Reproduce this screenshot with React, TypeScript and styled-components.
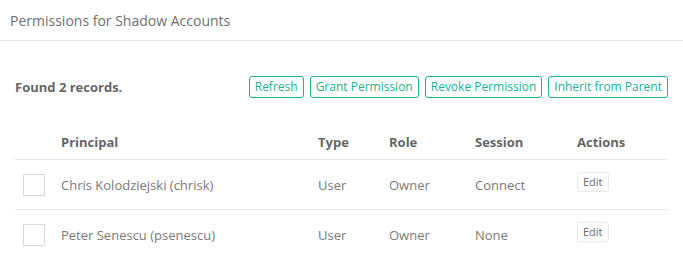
import styled, { createGlobalStyle } from 'styled-components'

const GlobalStyle = createGlobalStyle`
  body {
    margin: 0;
    background: #ffffff;
    font-family: 'Open Sans', 'Liberation Sans', sans-serif;
  }
`

const rows = [
  { id: 'chrisk', principal: 'Chris Kolodziejski (chrisk)', type: 'User', role: 'Owner', session: 'Connect' },
  { id: 'psenescu', principal: 'Peter Senescu (psenescu)', type: 'User', role: 'Owner', session: 'None' },
]

const actions = ['Refresh', 'Grant Permission', 'Revoke Permission', 'Inherit from Parent']

const Panel = styled.section`
  width: 683px;
  height: 273px;
  overflow: hidden;
`

const PanelHeader = styled.div`
  height: 41px;
  padding: 0 10px;
  display: flex;
  align-items: center;
  border-bottom: 1px solid #e7e7e7;
  box-sizing: border-box;
`

const Title = styled.h2`
  margin: 0;
  font-size: 14px;
  font-weight: 400;
  color: #707070;
`

const Body = styled.div`
  padding: 35px 15px 0 15px;
`

const Toolbar = styled.div`
  display: flex;
  justify-content: space-between;
  align-items: center;
`

const Count = styled.div`
  font-size: 13px;
  font-weight: 700;
  color: #666666;
`

const Buttons = styled.div`
  display: flex;
  gap: 6px;
`

const OutlineButton = styled.button`
  height: 22px;
  padding: 0 5px;
  border: 1px solid #1ab394;
  border-radius: 3px;
  background: #ffffff;
  color: #1ab394;
  font-family: inherit;
  font-size: 12px;
  line-height: 20px;
  cursor: pointer;
`

const Table = styled.table`
  width: 100%;
  margin-top: 25px;
  border-collapse: collapse;
  font-size: 13px;
  color: #7a7a7a;
`

const Th = styled.th<{ $width?: number }>`
  text-align: left;
  font-weight: 700;
  color: #666666;
  height: 34px;
  padding: 2px 0 0 0;
  border-bottom: 1px solid #e7e7e7;
  width: ${(p) => (p.$width ? `${p.$width}px` : 'auto')};
`

const Td = styled.td<{ $last?: boolean }>`
  height: 49px;
  padding: 0;
  border-bottom: ${(p) => (p.$last ? 'none' : '1px solid #e7e7e7')};
  vertical-align: middle;
`

const ActionTd = styled(Td)`
  vertical-align: top;
  padding-top: 12px;
  height: 37px;
`

const Check = styled.span`
  display: block;
  width: 20px;
  height: 20px;
  margin-left: 8px;
  border: 1px solid #d8d8d8;
`

const EditButton = styled.button`
  display: block;
  height: 20px;
  padding: 0 5px;
  border: 1px solid #e7eaec;
  border-radius: 3px;
  background: #ffffff;
  color: #676a6c;
  font-family: inherit;
  font-size: 11px;
  line-height: 18px;
`

export default function App() {
  return (
    <Panel>
      <GlobalStyle />
      <PanelHeader>
        <Title>Permissions for Shadow Accounts</Title>
      </PanelHeader>
      <Body>
        <Toolbar>
          <Count>Found 2 records.</Count>
          <Buttons>
            {actions.map((a) => (
              <OutlineButton key={a}>{a}</OutlineButton>
            ))}
          </Buttons>
        </Toolbar>
        <Table>
          <thead>
            <tr>
              <Th $width={46} />
              <Th $width={257}>Principal</Th>
              <Th $width={71}>Type</Th>
              <Th $width={86}>Role</Th>
              <Th $width={102}>Session</Th>
              <Th>Actions</Th>
            </tr>
          </thead>
          <tbody>
            {rows.map((r, i) => {
              const last = i === rows.length - 1
              return (
                <tr key={r.id}>
                  <Td $last={last}>
                    <Check />
                  </Td>
                  <Td $last={last}>{r.principal}</Td>
                  <Td $last={last}>{r.type}</Td>
                  <Td $last={last}>{r.role}</Td>
                  <Td $last={last}>{r.session}</Td>
                  <ActionTd $last={last}>
                    <EditButton>Edit</EditButton>
                  </ActionTd>
                </tr>
              )
            })}
          </tbody>
        </Table>
      </Body>
    </Panel>
  )
}
